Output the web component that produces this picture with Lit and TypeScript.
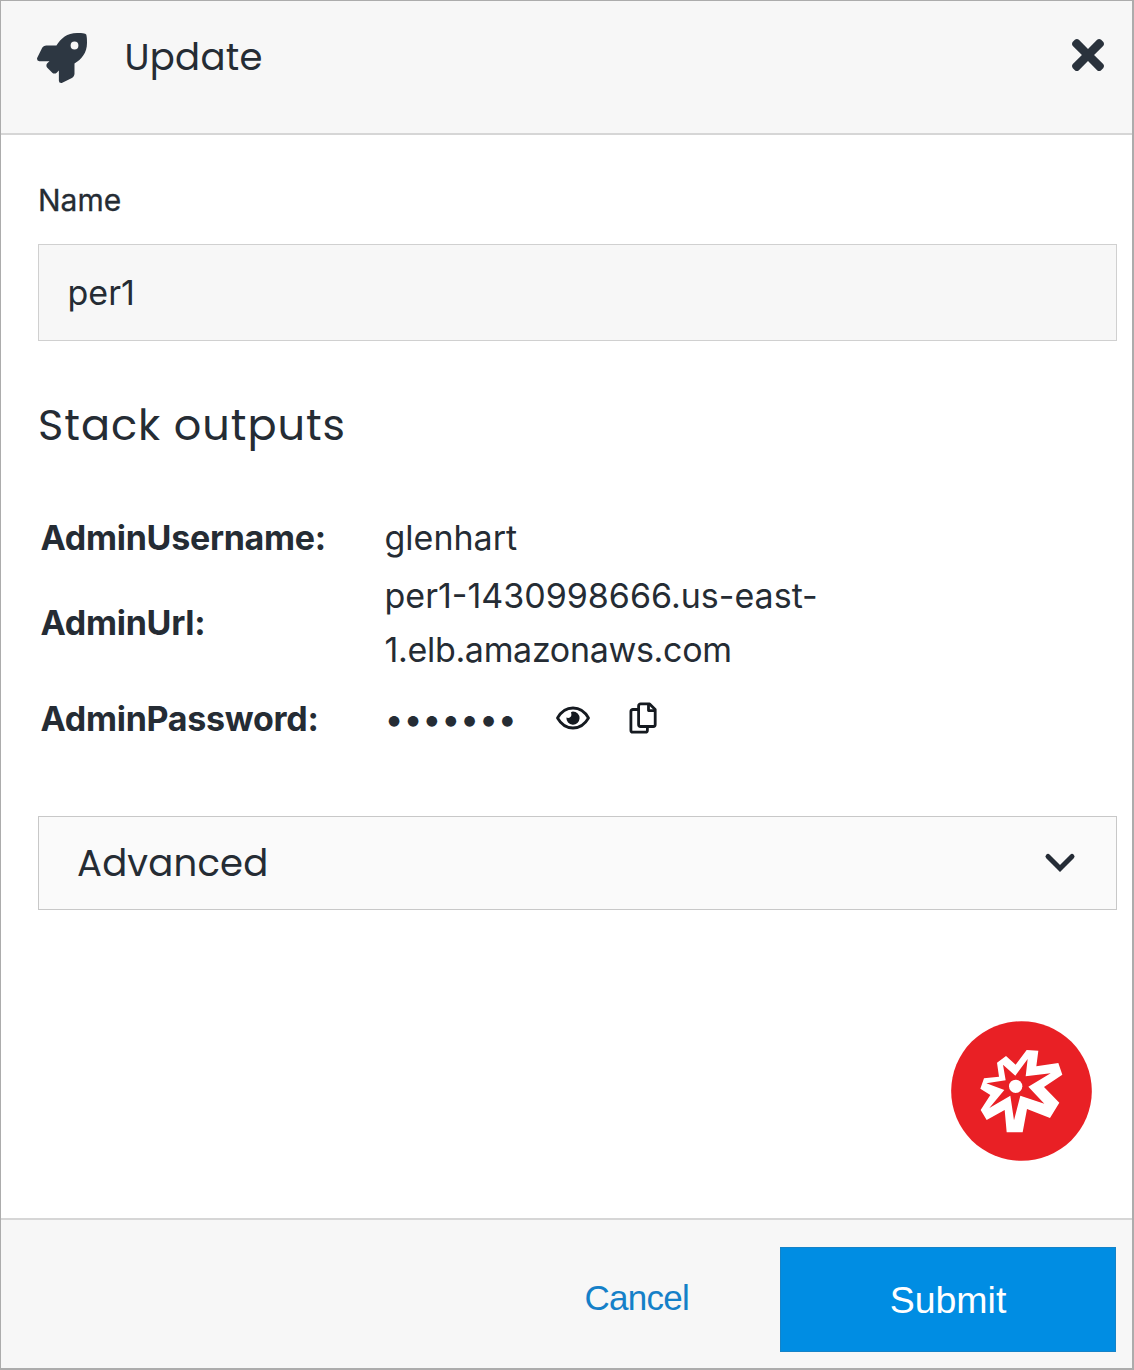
import { LitElement, html, css } from "lit";
import { customElement, state } from "lit/decorators.js";

@customElement("app-root")
export class AppRoot extends LitElement {
  static styles = css`
    :host {
      display: block;
      --ink: #252c34;
      --line: #d0d0d0;
      --geo: Poppins, Inter, sans-serif;
    }
    * {
      box-sizing: border-box;
    }
    .dialog {
      height: 1370px;
      border: 1px solid #acacac;
      border-width: 1px 2px 2px 1px;
      background: #fff;
      display: flex;
      flex-direction: column;
      color: var(--ink);
      font: 400 34px/54px Inter, sans-serif;
    }
    svg {
      display: block;
      flex: none;
    }
    button {
      border: 0;
      padding: 0;
      background: none;
      color: inherit;
      font: inherit;
    }
    .head {
      height: 134px;
      flex: none;
      background: #f7f7f7;
      border-bottom: 2px solid #d6d6d6;
      padding: 29px 28px 0 36px;
      display: flex;
      align-items: flex-start;
    }
    .rocket {
      margin-top: 3px;
    }
    .title {
      margin: 0 auto 0 37.5px;
      font: 400 37px/54px var(--geo);
      letter-spacing: 0.3px;
    }
    .close {
      margin-top: 9px;
    }
    .body {
      flex: 1;
      padding: 47px 15px 0 37px;
      display: flex;
      flex-direction: column;
    }
    .label {
      font-size: 30px;
      line-height: 36px;
      -webkit-text-stroke: 0.3px currentColor;
    }
    .field {
      margin-top: 26px;
      height: 97px;
      flex: none;
      border: 1px solid var(--line);
      background: #f7f7f7;
      padding: 0 28.5px;
      display: flex;
      align-items: center;
    }
    .section {
      margin: 54px 0 0;
      font: 400 43px/60px var(--geo);
      letter-spacing: 1px;
    }
    .outputs {
      margin: 55.5px 0 0 2.5px;
      display: grid;
      grid-template-columns: 344px 450px;
      grid-template-rows: 54px 108px 76px;
      row-gap: 4px;
      align-items: center;
    }
    .key {
      font-weight: 700;
      letter-spacing: -0.28px;
    }
    .tight {
      letter-spacing: -0.32px;
    }
    .secret {
      display: flex;
      align-items: center;
    }
    .dots {
      width: 170px;
      letter-spacing: -0.25px;
    }
    .secret svg {
      margin-bottom: 1px;
    }
    .copy {
      margin-left: 38px;
    }
    .advanced {
      margin-top: 59.5px;
      height: 94px;
      flex: none;
      border: 1px solid #c8c8c8;
      background: #fafafa;
      padding: 0 40px 0 38px;
      display: flex;
      align-items: center;
      justify-content: space-between;
      font: 400 37px/54px var(--geo);
      letter-spacing: 0.2px;
    }
    .badge {
      align-self: flex-end;
      margin: 111px 25px 0 0;
    }
    .foot {
      height: 150px;
      flex: none;
      border-top: 2px solid #d6d6d6;
      background: #f7f7f7;
      padding: 27px 16px 0 0;
      display: flex;
      justify-content: flex-end;
      font-family: "Liberation Sans", Arial, sans-serif;
    }
    .cancel {
      height: 102px;
      margin-right: 91px;
      color: #1580c8;
      font-size: 35px;
      letter-spacing: -0.75px;
    }
    .submit {
      width: 336px;
      height: 105px;
      background: #008de3;
      border: 1px solid #1583c8;
      color: #fff;
      font-size: 37.5px;
    }
  `;

  @state() private shown = false;

  render() {
    return html`
      <div class="dialog">
        <header class="head">
          <svg class="rocket" width="50" height="50" viewBox="0 0 512 512" fill="#2d3742">
            <path d="M505.12 19.09c-1.19-5.53-6.66-11-12.21-12.18C460.72 0 435.51 0 410.41 0 307.18 0 245.27 55.2 199.05 128H94.84c-16.35 0-35.56 11.88-42.89 26.48L2.52 253.3A28.4 28.4 0 0 0 0 264a24 24 0 0 0 24 24h103.8l-22.46 22.47c-11.37 11.36-13 32.26 0 45.25l50.9 50.9c11.16 11.19 32.16 13.16 45.28 0L224 384.16V488a24 24 0 0 0 24 24 28.56 28.56 0 0 0 10.7-2.52l98.73-49.39c14.63-7.3 26.5-26.5 26.5-42.86V312.8c72.6-46.3 128.04-108.4 128.04-211.1.1-25.2.1-50.4-6.85-82.61zM384.04 168a40 40 0 1 1 40-40 40 40 0 0 1-40 40z" />
          </svg>
          <h1 class="title">Update</h1>
          <button class="close" aria-label="Close">
            <svg width="32" height="32" viewBox="0 80 352 352" fill="#2a323c">
              <path d="M242.72 256l100.07-100.07c12.28-12.28 12.28-32.19 0-44.48l-22.24-22.24c-12.28-12.28-32.19-12.28-44.48 0L176 189.28 75.93 89.21c-12.28-12.28-32.19-12.28-44.48 0L9.21 111.45c-12.28 12.28-12.28 32.19 0 44.48L109.28 256 9.21 356.07c-12.28 12.28-12.28 32.19 0 44.48l22.24 22.24c12.28 12.28 32.2 12.28 44.48 0L176 322.72l100.07 100.07c12.28 12.28 32.2 12.28 44.48 0l22.24-22.24c12.28-12.28 12.28-32.19 0-44.48L242.72 256z" />
            </svg>
          </button>
        </header>

        <main class="body">
          <div class="label">Name</div>
          <div class="field">per1</div>
          <h2 class="section">Stack outputs</h2>
          <div class="outputs">
            <div class="key">AdminUsername:</div>
            <div>glenhart</div>
            <div class="key">AdminUrl:</div>
            <div>per1-1430998666.us-east-<br /><span class="tight">1.elb.amazonaws.com</span></div>
            <div class="key">AdminPassword:</div>
            <div class="secret">
              <span class="dots">•••••••</span>
              <button aria-label="Show" @click=${() => (this.shown = !this.shown)}>
                <svg width="36" height="26" viewBox="0 0 36 26">
                  <path d="M2.500 13C6.500 6 12 3 18 3S29.500 6 33.500 13C29.500 20 24 23 18 23S6.500 20 2.500 13z" fill="none" stroke="#151a20" stroke-width="2.800" stroke-linejoin="round" />
                  <path d="M18 6.500a6.600 6.600 0 1 1-6.600 6.100c1.300.700 3 .500 4-.500 1.200-1.200 1.300-3 .500-4.700.700-.500 1.300-.800 2.100-.900z" fill="#151a20" />
                </svg>
              </button>
              <button class="copy" aria-label="Copy">
                <svg width="28" height="32" viewBox="0 0 28 32" fill="none" stroke="#151a20" stroke-width="2.800" stroke-linejoin="round">
                  <path d="M9 7.500H3.900a2 2 0 0 0-2 2v18.700a2 2 0 0 0 2 2h12.500a2 2 0 0 0 2-2V25" />
                  <path d="M11.600 1.900h9l5.600 5.600v15a2 2 0 0 1-2 2H11.600a2 2 0 0 1-2-2V3.900a2 2 0 0 1 2-2z" />
                  <path d="M19.500 2.300v6.300h6.300" />
                </svg>
              </button>
            </div>
          </div>

          <div class="advanced">
            <span>Advanced</span>
            <svg width="32" height="22" viewBox="0 0 32 22" fill="none" stroke="#252c36" stroke-width="5" stroke-linecap="round">
              <path d="M4 4.500l12 12 12-12" />
            </svg>
          </div>

          <svg class="badge" width="141" height="140" viewBox="-57 -59 423 420">
            <ellipse cx="154.500" cy="151" rx="211" ry="209.500" fill="#e92025" />
            <path d="M170 28L205 30 199 77 265 67 277 102 222 139 268 186 240 232 171 205 158 275 110 275 104 208 50 238 32 208 61 163 31 144 42 113 87 108 81 66 108 46 137 72z" fill="#fff" />
            <path d="M173 55L167 107 242 98 175 138 223 189 151 165 132 239 121 165 58 202 103 148 49 128 107 119 99 72 136 105z" fill="#e92025" />
            <circle cx="137" cy="137" r="20" fill="#fff" />
          </svg>
        </main>

        <footer class="foot">
          <button class="cancel">Cancel</button>
          <button class="submit">Submit</button>
        </footer>
      </div>
    `;
  }
}
